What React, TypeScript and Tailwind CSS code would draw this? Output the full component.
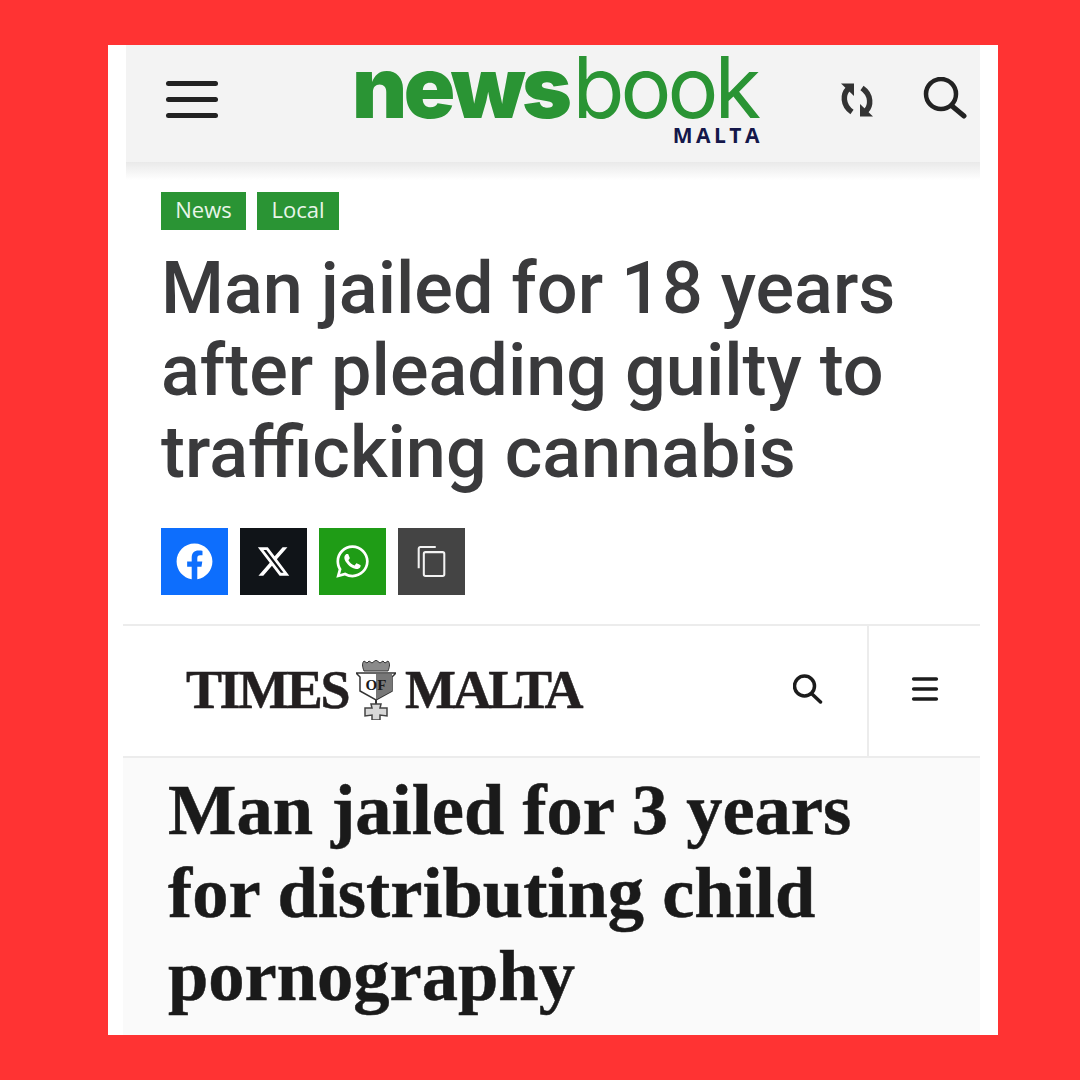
import { Menu } from 'lucide-react';
import { FaFacebook, FaWhatsapp } from 'react-icons/fa';
import { FaXTwitter } from 'react-icons/fa6';

function RefreshIcon() {
  return (
    <svg viewBox="0 0 34 34" className="w-[34px] h-[34px]" fill="#333333" stroke="none">
      <path d="M8 6 C3 11 2 22 12 29" fill="none" stroke="#333333" strokeWidth="5.5" />
      <path d="M1 0.5 H14 V13 Z" />
      <path d="M26 28 C31 23 32 12 22 5" fill="none" stroke="#333333" strokeWidth="5.5" />
      <path d="M33 33.5 H20 V21 Z" />
    </svg>
  );
}

function Crest() {
  return (
    <svg viewBox="0 0 40 60" className="w-[40px] h-[60px] shrink-0 ml-[8px] mr-[9px]">
      <path d="M8 11 C6 6 6 3 8 1 L11 3 L13 1 L16 3 L20 0 L24 3 L27 1 L29 3 L32 1 C34 3 34 6 32 11 Z" fill="#8a8a8a" stroke="#333" strokeWidth="1" />
      <path d="M0 13 H40 L36 17 V31 L20 40 L4 31 V17 Z" fill="#fff" stroke="#333" strokeWidth="1.5" />
      <path d="M20 14 H36 V31 L20 39.5 Z" fill="#777" />
      <text x="20" y="30" textAnchor="middle" fontSize="15" fontWeight="700" fill="#1a1a1a" fontFamily="'Liberation Serif', serif">OF</text>
      <path d="M20 40 V44" stroke="#333" strokeWidth="2" />
      <path d="M15 44 H25 L24 48 H31 V56 L24 55 V60 H16 V55 L9 56 V48 H16 Z" fill="#d8d8d8" stroke="#444" strokeWidth="1.5" />
    </svg>
  );
}

function ShareButton({ color, children }: { color: string; children: React.ReactNode }) {
  return <div className={`w-[67px] h-[67px] flex items-center justify-center text-white ${color}`}>{children}</div>;
}

export default function App() {
  return (
    <div className="w-[1080px] h-[1080px] bg-[#ff3333] pt-[45px] pl-[108px]">
      <div className="w-[890px] h-[990px] bg-white flex flex-col">
        {/* Newsbook */}
        <div className="pl-[18px] pr-[18px]">
          <div className="h-[117px] bg-[#f3f3f3] flex items-start">
            <div className="ml-[40px] mt-[36px] w-[52px] flex flex-col gap-[11px]">
              <div className="h-[5px] rounded-full bg-[#222222]" />
              <div className="h-[5px] rounded-full bg-[#222222]" />
              <div className="h-[5px] rounded-full bg-[#222222]" />
            </div>
            <div className="ml-[134px] w-[408px] flex flex-col items-end">
              <div className="w-[408px] h-[80px] mt-[3px] leading-[80px] text-[85px] text-[#2a9434] whitespace-nowrap [font-family:Inter,sans-serif]">
                <span className="font-black tracking-[-3.5px]">news</span>
                <span className="ml-[4px] font-normal tracking-[-4px]">book</span>
              </div>
              <div className="text-[21px] leading-[20px] mt-[-3px] font-bold tracking-[3.5px] mr-[-3px] text-[#14174a] [font-family:'Open_Sans',sans-serif]">MALTA</div>
            </div>
            <div className="ml-[80px] mt-[38px]"><RefreshIcon /></div>
            <svg viewBox="0 0 44 42" className="ml-[49px] mt-[32px] w-[44px] h-[42px]" fill="none" stroke="#222222">
              <circle cx="18" cy="17" r="15" strokeWidth="4.5" />
              <path d="M29 29 L41 39" strokeWidth="5" strokeLinecap="round" />
            </svg>
          </div>
          <div className="h-[18px] bg-gradient-to-b from-[#e9e9e9] to-white" />
        </div>

        {/* Newsbook article */}
        <div className="pl-[53px] pt-[12px]">
          <div className="flex gap-[11px]">
            <span className="w-[85px] h-[38px] pb-[3px] bg-[#2a9434] text-[#e8f5e9] text-[22px] flex items-center justify-center [font-family:'Open_Sans',sans-serif]">News</span>
            <span className="w-[82px] h-[38px] pb-[3px] bg-[#2a9434] text-[#e8f5e9] text-[22px] flex items-center justify-center [font-family:'Open_Sans',sans-serif]">Local</span>
          </div>
          <h1 className="mt-[18px] text-[72px] leading-[82px] whitespace-nowrap font-medium text-[#3a3a3c] [font-family:Roboto,sans-serif]">
            Man jailed for 18 years<br />after pleading guilty to<br />trafficking cannabis
          </h1>
          <div className="mt-[34px] flex gap-[12px]">
            <ShareButton color="bg-[#0d6efd]"><FaFacebook size={37} /></ShareButton>
            <ShareButton color="bg-[#101418]"><FaXTwitter size={35} /></ShareButton>
            <ShareButton color="bg-[#1f9c16]"><FaWhatsapp size={37} /></ShareButton>
            <ShareButton color="bg-[#444444]">
              <svg viewBox="0 0 34 38" className="w-[29px] h-[33px] -mt-[1px]" fill="none" stroke="#f2f2f2" strokeWidth="2.4">
                <path d="M2 27 V4 a2 2 0 0 1 2-2 H22" />
                <rect x="8" y="8" width="24" height="28" rx="2" />
              </svg>
            </ShareButton>
          </div>
        </div>

        {/* Times of Malta */}
        <div className="mt-[29px] ml-[15px] mr-[18px] flex-1 flex flex-col">
          <div className="h-[134px] border-y-2 border-[#ececec] flex items-center">
            <div className="flex-1 pl-[63px] pb-[2px] flex items-center text-[54px] font-bold text-[#231f20] [font-family:'Liberation_Serif',serif] [-webkit-text-stroke:0.5px_#231f20]">
              <span className="tracking-[-2.4px]">TIMES</span>
              <Crest />
              <span className="tracking-[-3.4px]">MALTA</span>
            </div>
            <svg viewBox="0 0 30 30" className="w-[30px] h-[30px] mr-[44px] mb-[4px]" fill="none" stroke="#1c1c1c">
              <circle cx="11.5" cy="12" r="10" strokeWidth="3.5" />
              <path d="M19 20 L27.5 28" strokeWidth="3.5" strokeLinecap="round" />
            </svg>
            <div className="w-[113px] pb-[4px] self-stretch border-l-2 border-[#ececec] flex items-center justify-center">
              <Menu className="w-[34px] h-[34px] text-[#1c1c1c]" strokeWidth={2.5} />
            </div>
          </div>
          <div className="flex-1 bg-[#fafafa] pl-[45px] pt-[10px]">
            <h2 className="text-[72.5px] leading-[83px] whitespace-nowrap font-bold text-[#1a1a1a] [font-family:'Liberation_Serif',serif] [-webkit-text-stroke:0.5px_#1a1a1a]">
              Man jailed for 3 years<br />for distributing child<br />pornography
            </h2>
          </div>
        </div>
      </div>
    </div>
  );
}
